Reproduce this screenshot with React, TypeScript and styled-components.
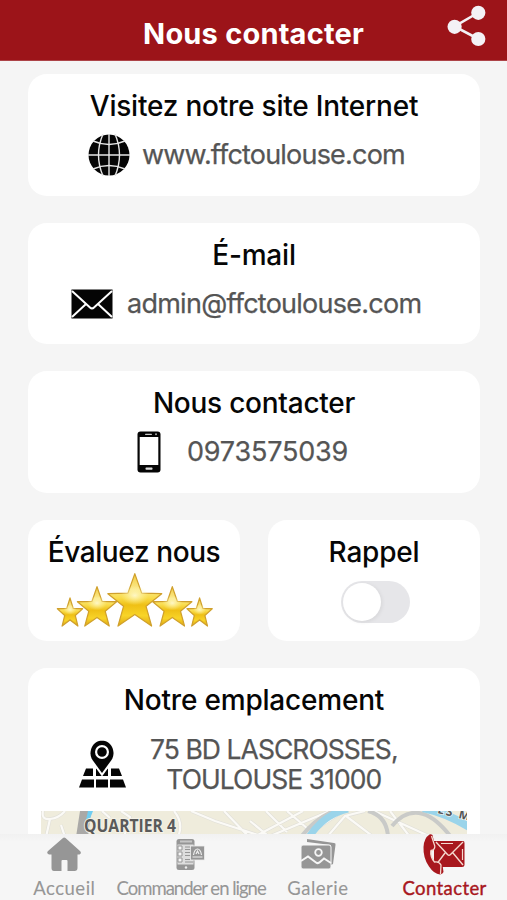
import React from "react";
import styled, { createGlobalStyle } from "styled-components";

const GlobalStyle = createGlobalStyle`
  * { box-sizing: border-box; }
  body { margin: 0; background: #f5f5f5; }
`;

const Screen = styled.div`
  width: 507px;
  height: 900px;
  display: flex;
  flex-direction: column;
  overflow: hidden;
  background: #f5f5f5;
  font-family: Inter, "Liberation Sans", sans-serif;
`;

const Header = styled.header`
  flex: none;
  height: 61px;
  display: grid;
  grid-template-columns: 60px 1fr 60px;
  align-items: start;
  background: #9c1419;
  border-bottom: 1px solid #ad4448;
`;

const HeaderTitle = styled.h1`
  grid-column: 2;
  margin: 16px 0 0;
  text-align: center;
  font-size: 29px;
  line-height: 36px;
  font-weight: 650;
  letter-spacing: 0.2px;
  color: #fff;
`;

const ShareButton = styled.button`
  margin: 4px 0 0;
  padding: 0;
  border: 0;
  width: 42px;
  height: 44px;
  background: none;
`;

const Content = styled.main`
  flex: 1;
  min-height: 0;
  overflow: hidden;
  padding: 13.4px 27px 0 28px;
  display: flex;
  flex-direction: column;
  gap: 27px;
`;

const Row = styled.div`
  flex: none;
  display: grid;
  grid-template-columns: 212px 212px;
  justify-content: space-between;
`;

const Card = styled.section<{ $tall?: boolean }>`
  flex: none;
  height: ${(p) => (p.$tall ? "260px" : "121.4px")};
  border-radius: 19px;
  background: #fff;
  padding-top: 14px;
  display: flex;
  flex-direction: column;
  align-items: center;
`;

const CardTitle = styled.h2<{ $spacing: number }>`
  margin: 0;
  font-size: 28px;
  line-height: 36px;
  font-weight: 500;
  letter-spacing: ${(p) => p.$spacing}px;
  color: #060606;
  white-space: nowrap;
`;

const Detail = styled.div<{ $left: number; $gap: number; $height?: number }>`
  align-self: stretch;
  height: ${(p) => p.$height ?? 62}px;
  padding-left: ${(p) => p.$left}px;
  display: flex;
  align-items: center;
  gap: ${(p) => p.$gap}px;
  svg { flex: none; }
`;

const DetailText = styled.span<{ $spacing: number }>`
  font-size: 27px;
  line-height: 30px;
  font-weight: 400;
  -webkit-text-stroke: 0.25px #555;
  letter-spacing: ${(p) => p.$spacing}px;
  color: #555;
  white-space: nowrap;
  font-feature-settings: "calt" 0;
`;

const Address = styled(DetailText)`
  font-size: 26.5px;
  text-align: center;
`;

const Stars = styled.svg`
  margin-top: 2px;
`;

const Toggle = styled.button`
  margin: 11px 0 0 3px;
  width: 69px;
  height: 42px;
  padding: 2px;
  border: 0;
  border-radius: 21px;
  background: #e6e6e9;
`;

const Knob = styled.span`
  display: block;
  width: 38px;
  height: 38px;
  border-radius: 50%;
  background: #fff;
  box-shadow: 1px 1px 4px rgba(0, 0, 0, 0.08);
`;

const MapView = styled.svg`
  flex: none;
`;

const TabBar = styled.nav`
  flex: none;
  height: 66px;
  display: grid;
  grid-template-columns: repeat(4, minmax(0, 1fr));
  background: linear-gradient(#f1f1f1, #f6f6f6 8px);
`;

const Tab = styled.a<{ $active?: boolean; $spacing: number }>`
  display: flex;
  flex-direction: column;
  align-items: center;
  font-family: Lato, sans-serif;
  font-size: 18.5px;
  line-height: 22px;
  font-weight: 400;
  -webkit-text-stroke: ${(p) => (p.$active ? 0.4 : 0.1)}px currentColor;
  letter-spacing: ${(p) => p.$spacing}px;
  padding-left: 2px;
  white-space: nowrap;
  color: ${(p) => (p.$active ? "#a8171d" : "#969696")};
`;

const TabIcon = styled.svg`
  flex: none;
  width: 46px;
  height: 43px;
`;

const ShareIcon = () => (
  <svg width="42" height="44" viewBox="0 0 42 44" fill="#f4f2f6">
    <path d="M31.500 8.500 7.500 22.500 31.500 35" fill="none" stroke="#f4f2f6" strokeWidth="2.600" />
    <circle cx="31.300" cy="8.800" r="7.100" />
    <circle cx="7.600" cy="22.800" r="7.100" />
    <circle cx="31.300" cy="35" r="7.100" />
  </svg>
);

const GlobeIcon = () => (
  <svg width="42" height="42" viewBox="0 0 42 42">
    <circle cx="21" cy="21" r="20.500" fill="#050505" />
    <g fill="none" stroke="#e6e6e6" strokeWidth="1.400">
      <path d="M21 0V42M0 21H42M15 0Q6 21 15 42M27 0Q36 21 27 42" />
      <path d="M5 7Q21 14 37 7M5 35Q21 28 37 35" />
    </g>
  </svg>
);

const MailIcon = () => (
  <svg width="42" height="30" viewBox="0 0 42 30">
    <rect x=".5" y=".5" width="41" height="29" fill="#050505" />
    <path d="M1 2 19 18.500Q21 20.300 23 18.500L41 2M1 28 15 15M41 28 27 15" fill="none" stroke="#fff" strokeWidth="2" />
  </svg>
);

const PhoneIcon = () => (
  <svg width="24" height="42" viewBox="0 0 24 42">
    <rect x=".5" y=".5" width="23" height="41" rx="3" fill="#050505" />
    <rect x="2.700" y="6" width="18.600" height="28" fill="#fff" />
    <rect x="8" y="2.700" width="7" height="1.200" rx=".6" fill="#ccc" />
    <circle cx="19" cy="3.300" r="1" fill="#aaa" />
    <rect x="8.500" y="36.500" width="7" height="2.300" rx=".7" fill="#ddd" />
  </svg>
);

const PinIcon = () => (
  <svg width="48" height="49" viewBox="0 0 48 49">
    <path d="M8 28.500H15V36H5ZM18 28.500H30V36H18ZM33 28.500H41L44 36H33ZM4 39.500H16V47.500H1ZM18 39.500H30V47.500H18ZM32 39.500H45L48 47.500H32Z" fill="#050505" />
    <path d="M24 33 14.500 20C11.500 15 12.500 11 13.500 8 16 2.500 20 .8 24 .8S32 2.500 34.500 8C35.500 11 36.500 15 33.500 20Z" fill="#050505" stroke="#fff" strokeWidth="4" paintOrder="stroke" />
    <circle cx="24" cy="12" r="5.900" fill="#050505" stroke="#fff" strokeWidth="2.200" />
  </svg>
);

const STAR = "M0-1 .25-.32.98-.3.41.14.61.83 0 .43-.61.83-.41.14-.98-.3-.25-.32Z";
const STARS = [
  { x: 16, y: 41.3, sx: 12.9, sy: 15.3 },
  { x: 145.6, y: 41.3, sx: 12.9, sy: 15.3 },
  { x: 43, y: 36.2, sx: 20, sy: 21.5 },
  { x: 118.3, y: 36.2, sx: 20, sy: 21.5 },
  { x: 80.8, y: 30.3, sx: 27.5, sy: 28.6 },
];

const StarRating = () => (
  <Stars width="160" height="56" viewBox="0 0 160 56">
    <defs>
      <linearGradient id="gold" x1="0" y1="0" x2="0" y2="1">
        <stop offset="0" stopColor="#f3cd3e" />
        <stop offset=".3" stopColor="#fbe98c" />
        <stop offset=".46" stopColor="#f9dc4c" />
        <stop offset=".6" stopColor="#efc015" />
        <stop offset=".8" stopColor="#f8d428" />
        <stop offset="1" stopColor="#dfa812" />
      </linearGradient>
      <radialGradient id="shine">
        <stop offset="0" stopColor="#fffbd9" stopOpacity=".85" />
        <stop offset="1" stopColor="#fff6a4" stopOpacity="0" />
      </radialGradient>
    </defs>
    {STARS.map(({ x, y, sx, sy }) => (
      <g key={x} transform={`translate(${x} ${y}) scale(${sx} ${sy})`}>
        <path d={STAR} fill="url(#gold)" stroke="#d0a02c" strokeWidth={1.2 / sx} strokeLinejoin="round" />
        <ellipse cx="0" cy="-.24" rx=".5" ry=".34" fill="url(#shine)" />
      </g>
    ))}
  </Stars>
);

const STREETS =
  "M2 0Q0 9 9 8T24 0M9 8 5 26M20 14 24 26M80 0 89 6 83 26M133 0Q143 12 137 26M61 0 69 7M150 0 174 10 223 26M183 0 208 26M213 26 262 0M227 26 289 0M209 10 226 24M225 0 246 21M246 0 267 18M263 26 302 0M286 26 304 5 324 0M305 5 330 24M333 0 390 26M349 0 369 26";

const MapPreview = () => (
  <MapView width="426" height="60" viewBox="0 0 426 60">
    <rect width="426" height="60" fill="#efecdc" />
    <path d={STREETS} fill="none" stroke="#e0dfd9" strokeWidth="3.400" />
    <path d={STREETS} fill="none" stroke="#fbfaf6" strokeWidth="2.200" />
    <path d="M39 0H50L47 26H35Z" fill="#aaa9a7" />
    <path d="M47 0H52L48 10 45 9Z" fill="#70cdf1" />
    <path d="M260 26Q279 1 307-4M327 0Q346 5 347 26M351 15Q363 0 378 2T410 26" fill="none" stroke="#c9cac8" strokeWidth="4" />
    <path d="M268 26Q283 3 307-2" fill="none" stroke="#9ad4ea" strokeWidth="7" />
    <path d="M382-3Q406 2 430 17" fill="none" stroke="#9ad4ea" strokeWidth="8" />
    <text x="43" y="20.500" textLength="92" lengthAdjust="spacingAndGlyphs" fontFamily="Open Sans, sans-serif" fontSize="17.500" fontWeight="700" fill="#5a5a5a" stroke="#f5f2e8" strokeWidth="2" paintOrder="stroke">QUARTIER 4</text>
    <text transform="translate(396 2) rotate(13)" fontFamily="Open Sans, sans-serif" fontSize="12" fontWeight="700" fill="#555" stroke="#eef4f4" strokeWidth="1.500" paintOrder="stroke" textLength="33">ES M</text>
  </MapView>
);

const HomeIcon = () => (
  <TabIcon viewBox="0 0 46 43" fill="#969696">
    <path d="M22 4Q23 3 24.500 4L39 17Q41 19 38.500 20.500H36.500V34Q36.500 37 33.500 37H26.500V27Q26.500 26 25.500 26H21.500Q20.500 26 20.500 27V37H13Q10.500 37 10.500 34V20.500H8Q5 19 7 17Z" />
  </TabIcon>
);

const OrderIcon = () => (
  <TabIcon viewBox="0 0 46 43">
    <rect x="8.500" y="5" width="18" height="31" rx="2.500" fill="#969696" />
    <rect x="9.500" y="10.500" width="16" height="20" fill="#ddd" />
    <path d="M10 12h4v4h-4zM10 18h4v4h-4zM10 24h4v4h-4z" fill="#f6f6f6" stroke="#969696" />
    <path d="M17 13H24M17 15.500H24M17 18.500H24M17 21.500H24M17 25.500H25M17 28H25" stroke="#969696" strokeWidth="1" />
    <path d="M12 7.500H24" stroke="#c6c6c6" strokeWidth="2" />
    <circle cx="18" cy="33.500" r="1.200" fill="#eee" />
    <rect x="22.500" y="12" width="14" height="14" fill="#969696" stroke="#eee" strokeWidth=".8" />
    <path d="M24.500 23H34.500M25.500 21Q26.500 15 29.500 15T33.500 21M28 20 29.500 17 31 20" stroke="#f0f0f0" strokeWidth="1.200" fill="none" />
  </TabIcon>
);

const GalleryIcon = () => (
  <TabIcon viewBox="0 0 46 43">
    <path d="M12 5 39 9Q41 9 40.500 11L38 30 36 31V11L12 8Z" fill="#969696" />
    <rect x="6" y="11" width="30" height="24" rx="2" fill="#969696" stroke="#f6f6f6" strokeWidth="1" />
    <path d="M6 27 13 22.500 21 28.500Q23 30 25 28L29 24.500 36 29" fill="none" stroke="#f6f6f6" strokeWidth="2" />
    <circle cx="23.500" cy="18.500" r="3.300" fill="none" stroke="#f6f6f6" strokeWidth="1.800" />
  </TabIcon>
);

const ContactIcon = () => (
  <TabIcon viewBox="0 0 46 43">
    <path d="M12 7H41Q42.500 7 42.500 9V31Q42.500 33 40 33H12Z" fill="#a8171d" />
    <path d="M14 8 25.500 20.500Q27 22 28.500 20.500L41 8M14 31 23 19M41 31 31 19" stroke="#f5d9cf" strokeWidth="1.400" fill="none" />
    <path d="M19 9.500H31M40.500 15V26" stroke="#f5d9cf" strokeWidth="1.200" />
    <path d="M7.500.5Q2 4 1.500 13 1 24 7 32.500 12 40 18 40.500 20.500 40 21.500 38L20.500 31Q17 27 13 28 8 23 8.500 17 12.500 16 13 12L10.500 1Q9 0 7.500.5Z" fill="#a8171d" />
    <path d="M9.500 2 12.800 12Q13 16 9 16.500 8 23 12.500 28 17 27 19 31L18.500 40" stroke="#f5d9cf" strokeWidth="1.300" fill="none" />
  </TabIcon>
);

export default function App() {
  return (
    <>
      <GlobalStyle />
      <Screen>
        <Header>
          <HeaderTitle>Nous contacter</HeaderTitle>
          <ShareButton aria-label="Partager"><ShareIcon /></ShareButton>
        </Header>
        <Content>
          <Card>
            <CardTitle $spacing={-0.22}>Visitez notre site Internet</CardTitle>
            <Detail $left={60} $gap={12}>
              <GlobeIcon />
              <DetailText $spacing={-0.8}>www.ffctoulouse.com</DetailText>
            </Detail>
          </Card>
          <Card>
            <CardTitle $spacing={-0.2}>É-mail</CardTitle>
            <Detail $left={43} $gap={14}>
              <MailIcon />
              <DetailText $spacing={-0.74}>admin@ffctoulouse.com</DetailText>
            </Detail>
          </Card>
          <Card>
            <CardTitle $spacing={-0.25}>Nous contacter</CardTitle>
            <Detail $left={109} $gap={26}>
              <PhoneIcon />
              <DetailText $spacing={-0.2}>0973575039</DetailText>
            </Detail>
          </Card>
          <Row>
            <Card>
              <CardTitle $spacing={-0.4}>Évaluez nous</CardTitle>
              <StarRating />
            </Card>
            <Card>
              <CardTitle $spacing={-0.2}>Rappel</CardTitle>
              <Toggle role="switch" aria-checked={false} aria-label="Rappel"><Knob /></Toggle>
            </Card>
          </Row>
          <Card $tall>
            <CardTitle $spacing={-0.2}>Notre emplacement</CardTitle>
            <Detail $left={50} $gap={24} $height={93}>
              <PinIcon />
              <Address $spacing={-0.95}>75 BD LASCROSSES,<br />TOULOUSE 31000</Address>
            </Detail>
            <MapPreview />
          </Card>
        </Content>
        <TabBar>
          <Tab $spacing={0.5}><HomeIcon />Accueil</Tab>
          <Tab $spacing={-1}><OrderIcon />Commander en ligne</Tab>
          <Tab $spacing={0.5}><GalleryIcon />Galerie</Tab>
          <Tab $active $spacing={0.4}><ContactIcon />Contacter</Tab>
        </TabBar>
      </Screen>
    </>
  );
}
